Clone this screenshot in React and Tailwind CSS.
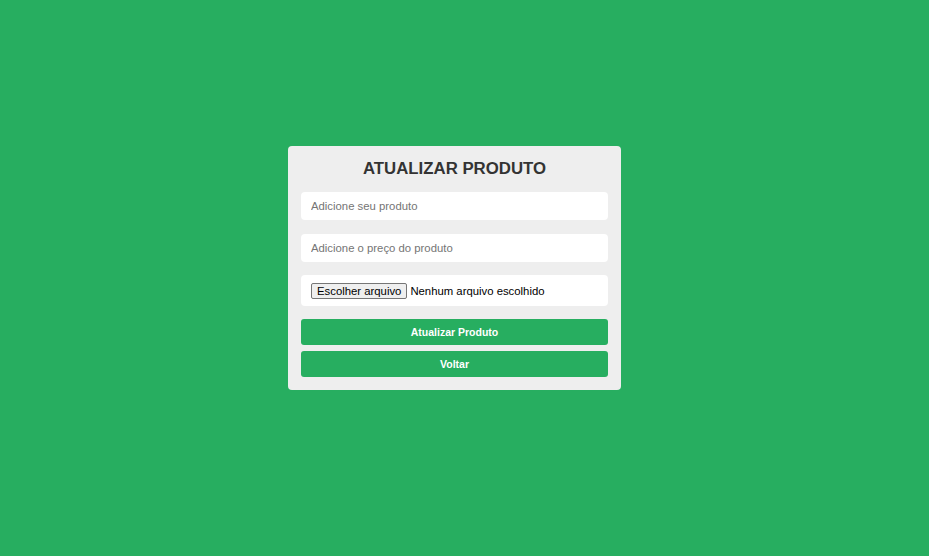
import React from 'react';

const App = () => {
    return (
        <div
            className="w-full h-[556px] bg-[#27ae60] flex items-center justify-center pr-[20px] pb-[20px]"
            style={{ fontFamily: '"Liberation Sans", Arial, sans-serif' }}
        >
            <div className="w-[333px] bg-[#eeeeee] rounded-[4px] pt-[12px] px-[13px] pb-[13px] flex flex-col">
                <h2 className="text-[16.8px] leading-[21px] font-bold text-[#333333] text-center mb-[13px]">
                    ATUALIZAR PRODUTO
                </h2>

                <input
                    type="text"
                    placeholder="Adicione seu produto"
                    className="h-[28px] mb-[14px] bg-white rounded-[4px] px-[10px] text-[11.33px] text-[#333] placeholder:text-[#757575] outline-none"
                />
                <input
                    type="text"
                    placeholder="Adicione o preço do produto"
                    className="h-[28px] mb-[13px] bg-white rounded-[4px] px-[10px] text-[11.33px] text-[#333] placeholder:text-[#757575] outline-none"
                />

                <div className="h-[31px] mb-[13px] bg-white rounded-[4px] px-[10px] pt-[1px] flex items-center text-[11.33px] text-black">
                    <span className="h-[16px] leading-[14px] px-[5px] border border-[#767676] bg-[#efefef] rounded-[2px] mr-[3px]">
                        Escolher arquivo
                    </span>
                    <span>Nenhum arquivo escolhido</span>
                </div>

                <button className="h-[26px] mb-[6px] pt-[2px] bg-[#27ae60] text-white text-[10.5px] font-bold rounded-[3px]">
                    Atualizar Produto
                </button>
                <button className="h-[26px] pt-[2px] bg-[#27ae60] text-white text-[10.5px] font-bold rounded-[3px]">
                    Voltar
                </button>
            </div>
        </div>
    );
};

export default App;
